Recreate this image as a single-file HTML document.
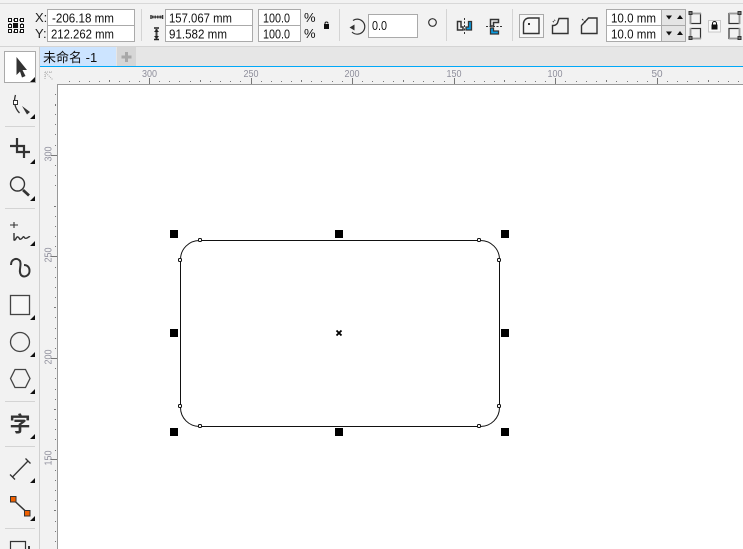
<!DOCTYPE html>
<html><head><meta charset="utf-8"><style>
html,body{margin:0;padding:0;background:#fff;overflow:hidden}
svg{display:block}
text{font-family:"Liberation Sans","Noto Sans CJK SC",sans-serif}
</style></head><body>
<svg xmlns="http://www.w3.org/2000/svg" width="743" height="549" viewBox="0 0 743 549">
<rect width="743" height="549" fill="#fff"/>
<!-- top toolbar -->
<rect width="743" height="46" fill="#f2f2f2"/>
<rect y="3" width="743" height="1" fill="#d8d8d8"/>
<rect y="46" width="743" height="1" fill="#d4d4d4"/>
<!-- tab row -->
<rect y="47" width="743" height="19" fill="#e6e6e6"/>
<rect x="40" y="47" width="76" height="19" fill="#cce4ff"/>
<rect x="117" y="47" width="19" height="19" fill="#d6d6d6"/>
<path d="M126.500 52v10M121.500 57h10" stroke="#a8a8a8" stroke-width="3"/>
<text x="43" y="62" font-size="13" fill="#111">未命名 -1</text>
<rect y="66" x="40" width="703" height="1.500" fill="#00a8f8"/>
<!-- rulers -->
<rect x="40" y="67" width="703" height="17" fill="#f2f2f2"/>
<rect x="40" y="67" width="17" height="482" fill="#f2f2f2"/>
<rect x="57" y="84" width="686" height="1" fill="#999"/>
<rect x="57" y="84" width="1" height="465" fill="#999"/>
<rect x="39" y="47" width="1" height="502" fill="#d0d0d0"/>
<!-- left toolbar -->
<rect y="47" width="39" height="502" fill="#f2f2f2"/>
<!-- ruler ticks -->
<g fill="#777">
<path d="M69 81h1v1h-1zM79 81h1v1h-1zM89 81h1v1h-1zM99 81h1v1h-1zM109 80h1v2h-1zM119 81h1v1h-1zM129 81h1v1h-1zM139 81h1v1h-1zM159 81h1v1h-1zM169 81h1v1h-1zM179 81h1v1h-1zM190 81h1v1h-1zM200 80h1v2h-1zM210 81h1v1h-1zM220 81h1v1h-1zM230 81h1v1h-1zM240 81h1v1h-1zM261 81h1v1h-1zM271 81h1v1h-1zM281 81h1v1h-1zM291 81h1v1h-1zM301 80h1v2h-1zM311 81h1v1h-1zM321 81h1v1h-1zM332 81h1v1h-1zM342 81h1v1h-1zM362 81h1v1h-1zM372 81h1v1h-1zM383 81h1v1h-1zM393 81h1v1h-1zM403 80h1v2h-1zM413 81h1v1h-1zM423 81h1v1h-1zM433 81h1v1h-1zM444 81h1v1h-1zM464 81h1v1h-1zM474 81h1v1h-1zM484 81h1v1h-1zM494 81h1v1h-1zM504 80h1v2h-1zM515 81h1v1h-1zM525 81h1v1h-1zM535 81h1v1h-1zM545 81h1v1h-1zM565 81h1v1h-1zM576 81h1v1h-1zM586 81h1v1h-1zM596 81h1v1h-1zM606 80h1v2h-1zM616 81h1v1h-1zM627 81h1v1h-1zM637 81h1v1h-1zM647 81h1v1h-1zM667 81h1v1h-1zM677 81h1v1h-1zM687 81h1v1h-1zM698 81h1v1h-1zM708 80h1v2h-1zM718 81h1v1h-1zM728 81h1v1h-1zM738 81h1v1h-1z"/>
<path d="M149 78h1v6h-1zM251 78h1v6h-1zM352 78h1v6h-1zM454 78h1v6h-1zM555 78h1v6h-1zM657 78h1v6h-1z"/>
<path d="M55 94h1v1h-1zM55 104h1v2h-1zM55 114h1v1h-1zM55 124h1v1h-1zM55 134h1v1h-1zM55 145h1v1h-1zM55 165h1v1h-1zM55 175h1v1h-1zM55 185h1v1h-1zM54 206h2v1h-2zM55 216h1v1h-1zM55 226h1v1h-1zM55 236h1v1h-1zM55 246h1v1h-1zM55 267h1v1h-1zM55 277h1v1h-1zM55 287h1v1h-1zM55 297h1v1h-1zM54 307h2v1h-2zM55 317h1v1h-1zM55 328h1v1h-1zM55 338h1v1h-1zM55 348h1v1h-1zM55 368h1v1h-1zM55 378h1v1h-1zM55 389h1v1h-1zM55 399h1v1h-1zM54 409h2v1h-2zM55 419h1v1h-1zM55 429h1v1h-1zM55 439h1v1h-1zM55 450h1v1h-1zM55 470h1v1h-1zM55 480h1v1h-1zM55 490h1v1h-1zM55 500h1v1h-1zM54 510h2v1h-2zM55 521h1v1h-1zM55 531h1v1h-1zM55 541h1v1h-1z"/>
<path d="M51 155h6v1h-6zM51 256h6v1h-6zM51 358h6v1h-6zM51 459h6v1h-6z"/>
</g>
<g font-size="10" fill="#8f8f9c" text-anchor="middle">
<text x="149.500" y="77" textLength="15" lengthAdjust="spacingAndGlyphs">300</text><text x="251" y="77" textLength="15" lengthAdjust="spacingAndGlyphs">250</text><text x="352" y="77" textLength="15" lengthAdjust="spacingAndGlyphs">200</text><text x="454" y="77" textLength="15" lengthAdjust="spacingAndGlyphs">150</text><text x="555" y="77" textLength="15" lengthAdjust="spacingAndGlyphs">100</text><text x="657" y="77">50</text>
<text transform="translate(51.500 154) rotate(-90)" textLength="15" lengthAdjust="spacingAndGlyphs">300</text>
<text transform="translate(51.500 255) rotate(-90)" textLength="15" lengthAdjust="spacingAndGlyphs">250</text>
<text transform="translate(51.500 357) rotate(-90)" textLength="15" lengthAdjust="spacingAndGlyphs">200</text>
<text transform="translate(51.500 458) rotate(-90)" textLength="15" lengthAdjust="spacingAndGlyphs">150</text>
</g>
<!-- ruler origin -->
<path d="M45 72h8M45 72v8M46 73l7 7M50 72v2M45 76h2" stroke="#aaa" fill="none" stroke-dasharray="1 1"/>
<!-- top toolbar inputs -->
<g fill="#fff" stroke="#aaa">
<rect x="47.500" y="9.500" width="87" height="16"/><rect x="47.500" y="25.500" width="87" height="16"/>
<rect x="165.500" y="9.500" width="87" height="16"/><rect x="165.500" y="25.500" width="87" height="16"/>
<rect x="258.500" y="9.500" width="42" height="16"/><rect x="258.500" y="25.500" width="42" height="16"/>
<rect x="368.500" y="14.500" width="49" height="23"/>
<rect x="606.500" y="9.500" width="79" height="16"/><rect x="606.500" y="25.500" width="79" height="16"/>
</g>
<rect x="662" y="10" width="23" height="31" fill="#e4e4e4"/>
<path d="M661.500 10v31M662 25.500h23" stroke="#aaa"/>
<path d="M666 15.500h6l-3 4zM666 31.500h6l-3 4z" fill="#111"/>
<path d="M677 19h6l-3-4zM677 35h6l-3-4z" fill="#111"/>
<g font-size="13" fill="#111">
<text x="35" y="22" fill="#222">X:</text><text x="35" y="38" fill="#222">Y:</text>
<text x="52" y="22.500" textLength="62" lengthAdjust="spacingAndGlyphs">-206.18 mm</text><text x="51" y="38.500" textLength="63" lengthAdjust="spacingAndGlyphs">212.262 mm</text>
<text x="169" y="22.500" textLength="63" lengthAdjust="spacingAndGlyphs">157.067 mm</text><text x="169" y="38.500" textLength="58" lengthAdjust="spacingAndGlyphs">91.582 mm</text>
<text x="263" y="22.500" textLength="27" lengthAdjust="spacingAndGlyphs">100.0</text><text x="263" y="38.500" textLength="27" lengthAdjust="spacingAndGlyphs">100.0</text>
<text x="304" y="22">%</text><text x="304" y="38">%</text>
<text x="372" y="30" textLength="15" lengthAdjust="spacingAndGlyphs">0.0</text>
<text x="611" y="22.500" textLength="45" lengthAdjust="spacingAndGlyphs">10.0 mm</text><text x="611" y="38.500" textLength="45" lengthAdjust="spacingAndGlyphs">10.0 mm</text>
</g>
<!-- selection icon -->
<g fill="#fff" stroke="#111" stroke-width="1">
<path d="M10 20v12M22 20v12M10 20h12M10 32h12" stroke-dasharray="2 1" fill="none"/>
<rect x="8.500" y="18.500" width="3" height="3"/><rect x="14.500" y="18.500" width="3" height="3"/><rect x="20.500" y="18.500" width="3" height="3"/>
<rect x="8.500" y="24.500" width="3" height="3"/><rect x="20.500" y="24.500" width="3" height="3"/>
<rect x="8.500" y="29.500" width="3" height="3"/><rect x="14.500" y="29.500" width="3" height="3"/><rect x="20.500" y="29.500" width="3" height="3"/>
</g>
<rect x="13" y="23" width="5" height="5" fill="#111"/>
<!-- separators -->
<path d="M141.500 9v32M339.500 9v32M446.500 9v32M512.500 9v32" stroke="#d4d4d4"/>
<!-- width / height icons -->
<path d="M151 15v4M162.500 15v4" stroke="#333" stroke-width="1.500"/>
<path d="M152 17h10" stroke="#555" stroke-width="3" stroke-dasharray="1.500 1"/>
<path d="M152 17h10" stroke="#222"/>
<path d="M154 28h5M154 39.500h5" stroke="#222" stroke-width="1.500"/>
<path d="M156.500 29v10" stroke="#444" stroke-width="2"/>
<path d="M154 32h5l-2.500-3zM154 36h5l-2.500 3z" fill="#222"/>
<!-- small lock -->
<path d="M325 24.500v-1a1.500 1.500 0 0 1 3 0" fill="none" stroke="#111"/><rect x="324" y="24" width="5" height="5" fill="#111"/>
<!-- rotate -->
<path d="M353 20.500A7.500 7.500 0 1 1 352 32" fill="none" stroke="#333" stroke-width="1.200"/>
<path d="M349.500 27.500l5-3v6z" fill="#333"/>
<circle cx="432.500" cy="22.500" r="3.800" fill="none" stroke="#333" stroke-width="1.200"/>
<!-- mirror icons -->
<path d="M457.500 21.500h3.500v5.500h2v3h-5.500z" fill="#f2f2f2" stroke="#333" stroke-width="1.500"/>
<path d="M471.500 21.500v8.500h-5.500v-3h2.500v-5.500z" fill="#0a9be0" stroke="#333" stroke-width="1.300"/>
<path d="M464.500 18v16" stroke="#333" stroke-dasharray="2 1.500"/>
<path d="M490.500 19.500h8v3h-5v3.500h-3z" fill="#f2f2f2" stroke="#333" stroke-width="1.500"/>
<path d="M490.500 28v6h8v-3h-5v-3z" fill="#0a9be0" stroke="#333" stroke-width="1.300"/>
<path d="M486 26.500h16" stroke="#333" stroke-dasharray="2 1.500"/>
<!-- corner type -->
<rect x="519.500" y="14.500" width="24" height="23" fill="#f7f7f7" stroke="#aaa"/>
<path d="M523.500 33.500v-10a5.500 5.500 0 0 1 5.500-5.500h10v15.500z" fill="none" stroke="#333" stroke-width="1.400"/>
<path d="M528 23h2v2h-2z" fill="#333"/>
<path d="M552.500 33.500v-8l1 0a5 5 0 0 0 4-2.500l1.500-4.500h9v15z" fill="none" stroke="#333" stroke-width="1.400"/>
<path d="M553 22l2-2" stroke="#333" stroke-dasharray="1 1" stroke-width="1.500"/>
<path d="M581.500 33.500v-8l7-7.500h8.500v15.500z" fill="none" stroke="#333" stroke-width="1.400"/>
<path d="M582 19l4 4" stroke="#333" stroke-dasharray="2 1"/>
<!-- corner lock boxes -->
<g fill="none" stroke="#333" stroke-width="1.200">
<rect x="690.500" y="13.500" width="10" height="10"/><rect x="690.500" y="28.500" width="10" height="10"/>
<rect x="729" y="13.500" width="10.500" height="10"/><rect x="729" y="28.500" width="10.500" height="10"/>
</g>
<path d="M690 13.500h11M690 38.500h11M729 13.500h11M729 38.500h11M690.500 13v11M690.500 28v11M739.500 13v11M739.500 28v11" stroke="#9a9a9a" fill="none" stroke-width="1.800"/>
<g fill="#777" stroke="#333"><rect x="689" y="11.500" width="3" height="3"/><rect x="689" y="36.500" width="3" height="3"/><rect x="738" y="11.500" width="3" height="3"/><rect x="738" y="36.500" width="3" height="3"/></g>
<rect x="708.500" y="20.500" width="12" height="11.500" fill="#fafafa" stroke="#c8c8c8"/>
<path d="M712.500 25v-1.500a2 2 0 0 1 4 0v1.500" fill="none" stroke="#111"/><rect x="711.500" y="24.500" width="6" height="5" fill="#111"/>
<!-- left tools: pick -->
<rect x="4.500" y="51.500" width="31" height="31" fill="#fff" stroke="#aaa"/>
<path d="M16.500 57L27 70L22.500 70L25.500 76L22 77.500L20 71.500L16.500 75z" fill="#333"/>
<path fill="#111" d="M30 82h5v-5zM30 119h5v-5zM30 164h5v-5zM30 201h5v-5zM30 246h5v-5zM30 320h5v-5zM30 357h5v-5zM30 394h5v-5zM30 439h5v-5zM30 483h5v-5zM30 521h5v-5z"/>
<path d="M5 126.500h30M5 208.500h30M5 401.500h30M5 446.500h30M5 528.500h30" stroke="#d4d4d4"/>
<!-- shape tool -->
<path d="M15.500 95c-2 6-1 13 4 18" fill="none" stroke="#333" stroke-width="1.300"/>
<rect x="13.500" y="100.500" width="4" height="4" fill="#fff" stroke="#333"/>
<path d="M22 106l8 6-3 2.500z" fill="#333"/>
<!-- crop -->
<path d="M17 138v14h13M10 146h14v12" fill="none" stroke="#333" stroke-width="2.200"/>
<!-- zoom -->
<circle cx="17.500" cy="184" r="7" fill="none" stroke="#333" stroke-width="1.400"/>
<path d="M23 190l6 5.500" stroke="#333" stroke-width="2.800"/>
<!-- freehand -->
<path d="M14 222v6M10 225h8" stroke="#333" stroke-width="1.100"/>
<path d="M14 233v7c2 1 2-4 4-3s1 3 3 2 2-3 3-2 1 2 3 1 2-2 3-1" fill="none" stroke="#333" stroke-width="1.400"/>
<!-- artistic media -->
<path d="M11 265C11 259 17 257 20 261C22 265 18 271 21 275C24 278 30 276 29.500 270C29 266 26 265 24 265" fill="none" stroke="#333" stroke-width="2"/>
<!-- rectangle -->
<rect x="10.500" y="295.500" width="19" height="19" fill="#f7f7f7" stroke="#444" stroke-width="1.300"/>
<!-- ellipse -->
<circle cx="20" cy="342" r="9.500" fill="none" stroke="#444" stroke-width="1.300"/>
<!-- polygon -->
<path d="M15 369.500h10.500l4.500 9-4.500 9H15l-4.500-9z" fill="none" stroke="#444" stroke-width="1.300"/>
<!-- text tool -->
<text x="20" y="431.500" font-size="21" font-weight="bold" fill="#333" text-anchor="middle" style="font-family:'Noto Sans CJK SC',sans-serif">字</text>
<!-- dimension -->
<path d="M12.500 477l15.500-16" stroke="#333" stroke-width="1.300"/>
<path d="M10 474.500l5 5M25.500 458.500l5 5" stroke="#333" stroke-width="1.300"/>
<!-- connector -->
<path d="M13 499.500l14 13" stroke="#333" stroke-width="1.500"/>
<rect x="10.500" y="496.500" width="5.500" height="5.500" fill="#f06000" stroke="#333" stroke-width="1"/><rect x="24.500" y="510.500" width="5.500" height="5.500" fill="#f06000" stroke="#333" stroke-width="1"/>
<!-- bottom tool -->
<path d="M10.500 549v-7.500h15v7.500" fill="none" stroke="#333" stroke-width="1.200"/>
<rect x="28" y="546" width="2" height="3" fill="#333"/>
<!-- shape -->
<rect x="180.500" y="240.500" width="319" height="186" rx="19" ry="19" fill="none" stroke="#111" stroke-width="1"/>
<g fill="#fff" stroke="#111">
<rect x="198.500" y="238.500" width="3" height="3" rx="1"/><rect x="477.500" y="238.500" width="3" height="3" rx="1"/>
<rect x="178.500" y="258.500" width="3" height="3" rx="1"/><rect x="497.500" y="258.500" width="3" height="3" rx="1"/>
<rect x="178.500" y="404.500" width="3" height="3" rx="1"/><rect x="497.500" y="404.500" width="3" height="3" rx="1"/>
<rect x="198.500" y="424.500" width="3" height="3" rx="1"/><rect x="477.500" y="424.500" width="3" height="3" rx="1"/>
</g>
<g fill="#000">
<rect x="170" y="230" width="8" height="8"/><rect x="335" y="230" width="8" height="8"/><rect x="501" y="230" width="8" height="8"/>
<rect x="170" y="329" width="8" height="8"/><rect x="501" y="329" width="8" height="8"/>
<rect x="170" y="428" width="8" height="8"/><rect x="335" y="428" width="8" height="8"/><rect x="501" y="428" width="8" height="8"/>
</g>
<path d="M336.500 330.500l5 5M341.500 330.500l-5 5" stroke="#000" stroke-width="1.800"/>
</svg>
</body></html>
